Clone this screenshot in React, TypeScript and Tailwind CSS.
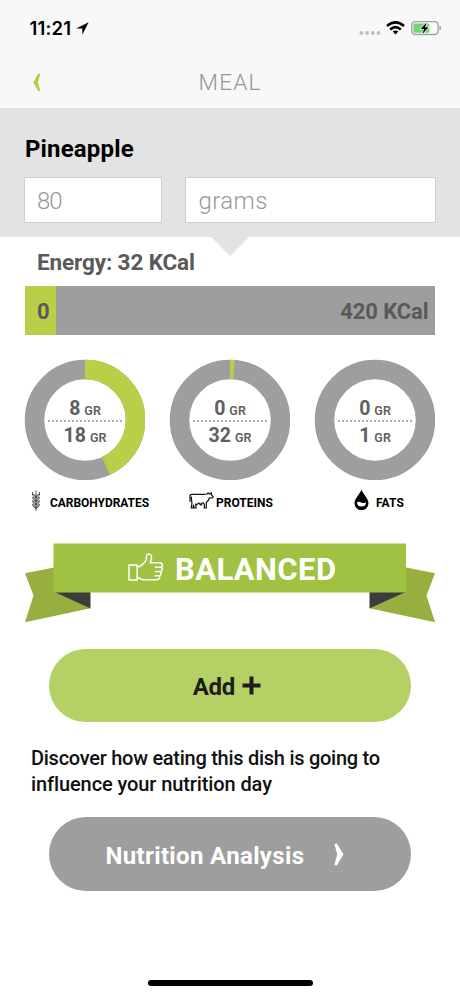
import { clsx } from 'clsx'

const nutrients = [
  { label: 'CARBOHYDRATES', icon: WheatIcon, value: 8, target: 18, degrees: 155.5, labelClass: 'ml-[9px] tracking-[-0.05px]' },
  { label: 'PROTEINS', icon: CowIcon, value: 0, target: 32, degrees: 4.6, labelClass: 'ml-[2px] tracking-[0.02px]' },
  { label: 'FATS', icon: DropIcon, value: 0, target: 1, degrees: 0, labelClass: 'ml-[7px] tracking-[0.1px]' },
]

function WheatIcon() {
  return (
    <svg className="shrink-0" width="10" height="21" viewBox="0 0 10 21" fill="none" stroke="#333" strokeWidth="0.8">
      <path d="M5 21V5M5 6V0.5M1.5 5V2M8.5 5V2" />
      <path d="M5 8Q1.7 7 1.5 3.8Q4.5 4.8 5 8Q8.3 7 8.5 3.8Q5.5 4.8 5 8Z" />
      <path d="M5 11.5Q1.7 10.5 1.5 7.3Q4.5 8.3 5 11.5Q8.3 10.5 8.5 7.3Q5.5 8.3 5 11.5Z" />
      <path d="M5 15Q1.7 14 1.5 10.8Q4.5 11.8 5 15Q8.3 14 8.5 10.8Q5.5 11.8 5 15Z" />
      <path d="M5 18.5Q1.7 17.5 1.5 14.3Q4.5 15.3 5 18.5Q8.3 17.5 8.5 14.3Q5.5 15.3 5 18.5Z" />
    </svg>
  )
}

function CowIcon() {
  return (
    <svg className="shrink-0" width="25" height="17" viewBox="0 0 25 17" fill="none" stroke="#111" strokeWidth="1.2" strokeLinejoin="round" strokeLinecap="round">
      <path d="M1 9.5V4.2Q1 2.4 3 2.4H14.5L18 2L19 0.9L20.4 1.9L22.6 0.7L22.2 2.3L24.3 4.8L23.4 6L20.5 5.8Q19.5 9 17.3 10.6V16H15.3V12.2L13.7 10.6L12.6 11.6V12.8H11V11.3L9.8 11L7.8 12.6L6.6 12L7.2 16H5.2L4.5 13L4 16H2.2L2.9 11.3L2.3 5" />
    </svg>
  )
}

function DropIcon() {
  return (
    <svg className="shrink-0" width="15" height="22" viewBox="0 0 15 22">
      <path d="M7.5 0.5C6.2 5 0.5 9.3 0.5 14.2A7 7 0 0 0 14.5 14.2C14.5 9.3 8.8 5 7.5 0.5Z" fill="#000" />
      <path d="M3 13.3Q5 12.2 7.2 13.6Q9.6 14.8 12 13.2Q12 17.4 7.5 17.6Q3 17.4 3 13.3Z" fill="#fff" />
    </svg>
  )
}

function ThumbIcon() {
  return (
    <svg width="36" height="29" viewBox="0 0 36 29" fill="none" stroke="#fff" strokeWidth="1.5" strokeLinejoin="round" strokeLinecap="round">
      <path d="M1 12H9.2V27H1Z" />
      <path d="M9.2 13.6H12C14.6 11.4 17.6 8.9 18.1 6.9L18.6 2.6Q18.8 0.9 20.7 0.9C23 0.9 23.8 3.2 23.5 5.2L22.2 9.7H32Q34.4 9.9 34.4 12.2Q34.4 14.3 32.2 14.3H27.5M32.2 14.3Q34.5 14.7 34.2 16.8Q33.9 18.6 31.8 18.6H27.5M31.8 18.6Q33.6 19.2 33.1 21.1Q32.6 22.7 30.8 22.7H27.2M30.8 22.7Q32.2 23.3 31.6 25Q31 26.5 29 26.7H15.5Q13.2 26.7 11.5 24.9H9.2" />
    </svg>
  )
}

function StatusBar() {
  return (
    <div className="flex h-[56px] items-center justify-between pr-[18px] pl-[29.5px]">
      <div className="flex items-center">
        <span className="pt-[1px] font-['Inter',sans-serif] text-[18.5px] font-semibold tracking-[0.15px]">11:21</span>
        <svg className="ml-[5px]" width="13" height="13" viewBox="0 0 13 13">
          <path d="M12.7 0.3L0.2 6.6H6.3V12.8Z" />
        </svg>
      </div>
      <div className="flex items-center">
        <svg width="22" height="16" viewBox="0 0 22 16" fill="#bdbdbd">
          <circle cx="2.4" cy="13" r="1.9" />
          <circle cx="8.1" cy="13" r="1.9" />
          <circle cx="13.8" cy="13" r="1.9" />
          <circle cx="19.5" cy="13" r="1.9" />
        </svg>
        <svg className="ml-[5px]" width="19" height="14" viewBox="0 0 19 14" fill="none" stroke="#000" strokeWidth="2.6">
          <path d="M1 5.1Q9.5 -2.3 18 5.1" />
          <path d="M4.2 8.5Q9.5 3.9 14.8 8.5" />
          <path d="M9.5 13.6L6.7 10.6Q9.5 8.4 12.3 10.6Z" fill="#000" stroke="none" />
        </svg>
        <svg className="ml-[6px]" width="31" height="16" viewBox="0 0 31 16">
          <rect x="0.7" y="1.7" width="26.4" height="12.8" rx="3.4" fill="none" stroke="#a3a3a3" strokeWidth="1.3" />
          <rect x="2.4" y="3.4" width="16" height="9.4" rx="1.6" fill="#72d572" />
          <path d="M28.4 5.6Q30.2 6.3 30.2 8.1T28.4 10.6Z" fill="#a3a3a3" />
          <path d="M15.4 2.4L9.7 9H12.9L11.6 14L17.5 7.2H14.2Z" fill="#000" stroke="#f8f8f8" strokeWidth="1.4" paintOrder="stroke" />
        </svg>
      </div>
    </div>
  )
}

function NavBar() {
  return (
    <div className="grid h-[52px] grid-cols-[60px_1fr_60px] items-center">
      <button className="pl-[33px]">
        <svg width="8" height="19" viewBox="0 0 8 19">
          <path d="M5.2 0.4L7.4 0.8L5 9.3L7.4 17.8L5.2 18.3L0.3 9.3Z" fill="#b3cf48" />
        </svg>
      </button>
      <h1 className="text-center text-[22.5px] leading-none font-light tracking-[1.2px] text-[#969696]">MEAL</h1>
    </div>
  )
}

function Amount({ grams }: { grams: number }) {
  return (
    <div className="flex h-[27px] items-baseline justify-center gap-[4px]">
      <span>{grams}</span>
      <span className="text-[12.5px] font-semibold">GR</span>
    </div>
  )
}

function Ring({ value, target, degrees }: { value: number; target: number; degrees: number }) {
  return (
    <div className="grid size-[121px] place-items-center">
      <svg className="col-start-1 row-start-1" width="121" height="121" viewBox="0 0 121 121" fill="none" strokeWidth="19.5">
        <circle cx="61" cy="61" r="50.5" stroke="#9e9e9e" />
        {degrees > 0 && (
          <circle cx="61" cy="61" r="50.5" stroke="#bace48" pathLength="360" strokeDasharray={`${degrees} 360`} transform="rotate(-90 61 61)" />
        )}
        <path d="M24 62H98.5" stroke="#b0b0b0" strokeWidth="2" strokeDasharray="2 2" />
      </svg>
      <div className="col-start-1 row-start-1 pt-[4px] pl-[1px] text-[19.5px] leading-[27px] font-bold text-[#606060]">
        <Amount grams={value} />
        <Amount grams={target} />
      </div>
    </div>
  )
}

function Ribbon() {
  return (
    <div className="mt-[29px] grid h-[80px]">
      <svg className="col-start-1 row-start-1" width="460" height="80" viewBox="0 0 460 80">
        <path d="M54 24.5L25 30.3L33.5 52.5L25 79.3L90.5 65.2L54 49Z" fill="#97af3e" />
        <path d="M406 24.5L435 30.3L426.5 52.5L435 79.3L369.5 65.2L406 49Z" fill="#97af3e" />
        <path d="M54 49H90.5V65.5Z" fill="#3c3c3b" />
        <path d="M406 49H369.5V65.5Z" fill="#3c3c3b" />
        <path d="M53.5 0.5H406V49.5H53.5Z" fill="#a1c143" />
      </svg>
      <div className="col-start-1 row-start-1 flex h-[52px] items-center pl-[127.5px] text-white">
        <div className="-mt-[3px]">
          <ThumbIcon />
        </div>
        <span className="ml-[11.5px] text-[31px] leading-none font-bold tracking-[0.4px]">BALANCED</span>
      </div>
    </div>
  )
}

export default function App() {
  return (
    <div className="flex h-[996px] w-[460px] flex-col overflow-hidden bg-white font-['Roboto',sans-serif] text-black">
      <header className="h-[108px] shrink-0 bg-[#f8f8f8]">
        <StatusBar />
        <NavBar />
      </header>

      <section className="h-[129px] shrink-0 bg-[#e3e3e3] px-[24px] pt-[27px]">
        <h2 className="pl-[1px] text-[24px] leading-[28px] font-bold tracking-[0.15px]">Pineapple</h2>
        <div className="mt-[14px] flex gap-[23px] text-[24px] font-light text-[#999]">
          <div className="flex h-[46px] w-[138px] items-center border border-[#cfcfcf] bg-white pt-[2px] pl-[12px] tracking-[-1px]">80</div>
          <div className="flex h-[46px] w-[251px] items-center border border-[#cfcfcf] bg-white pt-[2px] pl-[12.5px] tracking-[0.4px]">grams</div>
        </div>
      </section>

      <div className="flex h-[49px] shrink-0">
        <div className="w-[211px] pt-[11px] pl-[37px] text-[22.5px] leading-[28px] font-bold tracking-[-0.12px] whitespace-nowrap text-[#595959]">
          Energy: 32 KCal
        </div>
        <svg width="38" height="20" viewBox="0 0 38 20">
          <path d="M0 0H38L19 19Z" fill="#e3e3e3" />
        </svg>
      </div>

      <div className="mx-[25px] flex h-[49px] w-[410px] shrink-0 items-center bg-[#9e9e9e] text-[22px] font-bold text-[#595959]">
        <div className="flex h-full w-[31px] items-center bg-[#bace48] pt-[2px] pl-[12px]">0</div>
        <div className="flex-1 pt-[2px] pr-[6.5px] text-right tracking-[-0.1px]">420 KCal</div>
      </div>

      <div className="mt-[24px] ml-[24px] flex gap-[24px]">
        {nutrients.map((item) => (
          <div key={item.label} className="w-[121px]">
            <Ring value={item.value} target={item.target} degrees={item.degrees} />
            <div
              className={clsx(
                'mt-[8px] flex h-[26px] items-center whitespace-nowrap',
                item.label === 'CARBOHYDRATES' && 'pl-[7px]',
                item.label === 'PROTEINS' && 'pl-[20px]',
                item.label === 'FATS' && 'pl-[40px]',
              )}
            >
              <div className="-mt-[2px]">
                <item.icon />
              </div>
              <span className={clsx('pt-[3px] text-[12px] leading-none font-bold', item.labelClass)}>{item.label}</span>
            </div>
          </div>
        ))}
      </div>

      <Ribbon />

      <main className="flex flex-1 flex-col pt-[26px]">
        <button className="mx-[49px] flex h-[73px] items-center justify-center rounded-full bg-[#b5d166] pr-[6px] text-[24px] font-bold text-[#1d1d1b]">
          <span className="pt-[2px] tracking-[-0.3px]">Add</span>
          <svg className="ml-[7.5px]" width="19" height="19" viewBox="0 0 19 19">
            <path d="M9.5 0.5V18.5M0.5 9.5H18.5" stroke="#1d1d1b" strokeWidth="4" />
          </svg>
        </button>
        <p className="mt-[24px] ml-[31px] text-[20px] leading-[25.5px] font-medium tracking-[-0.27px] text-[#111]">
          Discover how eating this dish is going to
          <br />
          <span className="tracking-[-0.1px]">influence your nutrition day</span>
        </p>
        <button className="mx-[49px] mt-[20px] flex h-[74px] items-center rounded-full bg-[#9e9e9e] pl-[56.5px] text-[24px] font-bold text-white">
          <span className="pt-[3px] tracking-[0.35px]">Nutrition Analysis</span>
          <svg className="ml-[29.5px]" width="10" height="23" viewBox="0 0 10 23">
            <path d="M2.8 0.5L9.5 11.3L2.8 22.6L0.4 22L3.2 11.3L0.4 1Z" fill="#fff" />
          </svg>
        </button>
      </main>

      <footer className="flex h-[16px] shrink-0 justify-center">
        <div className="h-[6px] w-[165px] rounded-full bg-black" />
      </footer>
    </div>
  )
}
